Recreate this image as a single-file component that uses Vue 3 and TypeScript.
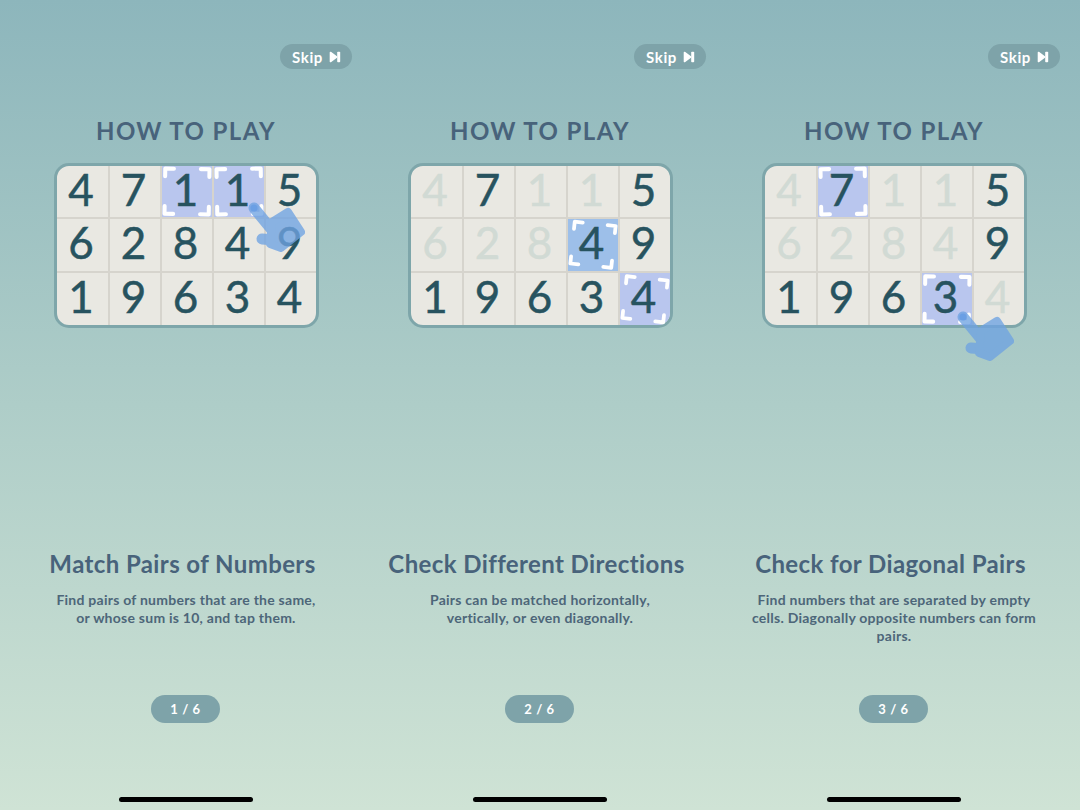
<script setup lang="ts">
interface Cell {
  n: number
  dim?: boolean
  mark?: 'soft' | 'strong'
  tilt?: number
}
interface Page {
  title: string
  lines: string[]
  cells: Cell[]
  hand?: { left: number, top: number }
}

// 数字の並びは全ページ共通
const digits = [4, 7, 1, 1, 5, 6, 2, 8, 4, 9, 1, 9, 6, 3, 4]

function makeCells(dim: number[], marks: Record<number, Partial<Cell>>): Cell[] {
  return digits.map((n, i) => ({ n, dim: dim.includes(i), ...marks[i] }))
}

// 傾きが大きい枠はセルからはみ出ないよう少し縮める
function bracketTransform(tilt = 0): string {
  const scale = Math.abs(tilt) > 3 ? 0.93 : 1
  return `rotate(${tilt}deg) scale(${scale})`
}

const pages: Page[] = [
  {
    title: 'Match Pairs of Numbers',
    lines: ['Find pairs of numbers that are the same,', 'or whose sum is 10, and tap them.'],
    cells: makeCells([], { 2: { mark: 'soft', tilt: 1 }, 3: { mark: 'soft', tilt: -1 } }),
    hand: { left: 191, top: 34 },
  },
  {
    title: 'Check Different Directions',
    lines: ['Pairs can be matched horizontally,', 'vertically, or even diagonally.'],
    cells: makeCells([0, 2, 3, 5, 6, 7], { 8: { mark: 'strong', tilt: 6 }, 14: { mark: 'soft', tilt: 6 } }),
  },
  {
    title: 'Check for Diagonal Pairs',
    lines: ['Find numbers that are separated by empty', 'cells. Diagonally opposite numbers can form', 'pairs.'],
    cells: makeCells([0, 2, 3, 5, 6, 7, 8, 14], { 1: { mark: 'soft', tilt: -1 }, 13: { mark: 'soft', tilt: 1 } }),
    hand: { left: 192, top: 143 },
  },
]
</script>

<template>
  <div class="screens">
    <section v-for="(page, idx) in pages" :key="page.title" class="screen">
      <button class="skip">
        Skip
        <svg width="12" height="12" viewBox="0 0 12 12">
          <path d="M1.5 1.5 L7.5 6 L1.5 10.5 Z" fill="#fff" stroke="#fff" stroke-width="1.6" stroke-linejoin="round" />
          <rect x="8.2" y="0.8" width="3" height="10.4" rx="0.8" fill="#fff" />
        </svg>
      </button>
      <h1 class="how">HOW TO PLAY</h1>
      <div class="board">
        <div
          v-for="(cell, i) in page.cells"
          :key="i"
          class="cell"
          :class="{ dim: cell.dim, soft: cell.mark === 'soft', strong: cell.mark === 'strong' }"
        >
          <svg
            v-if="cell.mark"
            class="brackets"
            viewBox="0 0 52 53"
            :style="{ transform: bracketTransform(cell.tilt) }"
          >
            <path
              d="M3 11 V3 H12 M40 3 H49 V11 M49 42 V50 H40 M12 50 H3 V42"
              fill="none"
              stroke="#fff"
              stroke-width="4.2"
              stroke-linecap="round"
              stroke-linejoin="round"
            />
          </svg>
          <span class="digit">{{ cell.n }}</span>
        </div>
        <svg
          v-if="page.hand"
          class="hand"
          width="60"
          height="60"
          viewBox="0 0 60 60"
          :style="{ left: page.hand.left + 'px', top: page.hand.top + 'px' }"
        >
          <g opacity="0.78">
            <path d="M6 8 L24 30" stroke="#6fa3e2" stroke-width="11" stroke-linecap="round" />
            <path d="M14 39 L28 40" stroke="#6fa3e2" stroke-width="11" stroke-linecap="round" />
            <path
              d="M24 22 L40 12 L53 32 L33 48 L22 44 Z"
              fill="#6fa3e2"
              stroke="#6fa3e2"
              stroke-width="8"
              stroke-linejoin="round"
            />
          </g>
          <circle cx="6" cy="8" r="3.6" fill="#6b9fe4" />
        </svg>
      </div>
      <h2 class="headline">{{ page.title }}</h2>
      <p class="desc">
        <span v-for="line in page.lines" :key="line">{{ line }}</span>
      </p>
      <div class="counter">{{ idx + 1 }} / 6</div>
      <div class="home-bar"></div>
    </section>
  </div>
</template>

<style>
html,
body {
  margin: 0;
  padding: 0;
}
</style>

<style scoped>
.screens {
  width: 1080px;
  height: 810px;
  padding-left: 9px;
  box-sizing: border-box;
  display: grid;
  grid-template-columns: repeat(3, 354px);
  background: linear-gradient(180deg, #8db6bc 0%, #aecdc8 50%, #cfe3d5 100%);
  overflow: hidden;
  font-family: Lato, "Noto Sans", sans-serif;
}

.screen {
  display: flex;
  flex-direction: column;
  align-items: center;
  height: 810px;
}

.skip {
  align-self: flex-end;
  margin: 44px 11px 0 0;
  width: 72px;
  height: 25px;
  border: none;
  border-radius: 13px;
  background: #7ea3a9;
  color: #fff;
  font: 700 15px Lato, sans-serif;
  letter-spacing: 0.6px;
  display: flex;
  align-items: center;
  justify-content: center;
  gap: 6px;
  padding: 0 0 0 1px;
}

.how {
  margin: 47px 0 0;
  height: 30px;
  line-height: 30px;
  font-size: 24px;
  font-weight: 700;
  letter-spacing: 1.4px;
  color: #48637b;
}

.board {
  position: relative;
  margin-top: 17px;
  width: 259px;
  height: 159px;
  border: 3px solid #7ea6aa;
  border-radius: 15px;
  background: #e9e8e2;
  display: grid;
  grid-template-columns: 53px 52px 52px 52px 50px;
  grid-template-rows: 53px 53.5px 52.5px;
}

.cell {
  position: relative;
  display: flex;
  align-items: center;
  justify-content: center;
  box-sizing: border-box;
  padding: 0 2px 5px 0;
  border-right: 2px solid #d6d4cd;
  border-bottom: 2px solid #d6d4cd;
}

.cell:nth-child(5n) {
  border-right: none;
}

.cell:nth-child(n + 11) {
  border-bottom: none;
}

.cell.soft {
  background: #b9c6ee;
}

.cell.strong {
  background: #9dbfe9;
}

.cell:nth-child(15).soft {
  border-bottom-right-radius: 12px;
}

.digit {
  position: relative;
  font-size: 44px;
  line-height: 1;
  color: #27535f;
  -webkit-text-stroke: 0.5px currentColor;
}

.dim .digit {
  color: #d1dad4;
}

.brackets {
  position: absolute;
  inset: 0;
  width: 100%;
  height: 100%;
  overflow: visible;
}

.hand {
  position: absolute;
  overflow: visible;
}

.headline {
  margin: 221px 7px 0 0;
  height: 30px;
  line-height: 30px;
  font-size: 24px;
  font-weight: 700;
  letter-spacing: 0.4px;
  color: #48637b;
}

.desc {
  margin: 12px 0 0;
  height: 72px;
  font-size: 14px;
  line-height: 18px;
  font-weight: 700;
  letter-spacing: 0.25px;
  color: #4d6679;
  text-align: center;
  display: flex;
  flex-direction: column;
}

.counter {
  margin: 32px 0 0 -1px;
  width: 69px;
  height: 28px;
  border-radius: 14px;
  background: #7ea3a9;
  color: #fff;
  font-size: 13px;
  font-weight: 700;
  letter-spacing: 0.6px;
  line-height: 28px;
  text-align: center;
}

.home-bar {
  margin-top: 74px;
  width: 134px;
  height: 5px;
  border-radius: 3px;
  background: #000;
}
</style>
